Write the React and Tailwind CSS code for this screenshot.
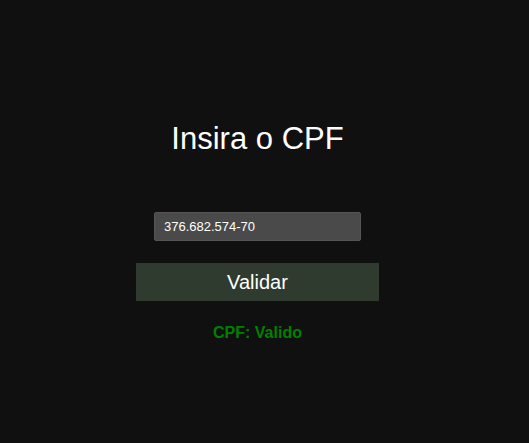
// App.jsx - Validador de CPF
export default function App() {
  return (
    <div className="min-h-screen bg-[#101010] font-['Liberation_Sans',Arial,sans-serif]">
      <div className="w-[515px] flex flex-col items-center pt-[121px]">
        <h1 className="text-[31px] leading-[36px] text-white">Insira o CPF</h1>

        <input
          type="text"
          defaultValue="376.682.574-70"
          className="mt-[55px] w-[207px] h-[29px] rounded-[2px] bg-[#4a4a4a] border border-[#555] px-[9px] text-[13px] text-white outline-none"
        />

        <button className="mt-[22px] w-[243px] h-[38px] bg-[#2f3b2f] text-[20px] text-white">
          Validar
        </button>

        <p className="mt-[20px] text-[16px] font-bold text-[#008000]">CPF: Valido</p>
      </div>
    </div>
  );
}
